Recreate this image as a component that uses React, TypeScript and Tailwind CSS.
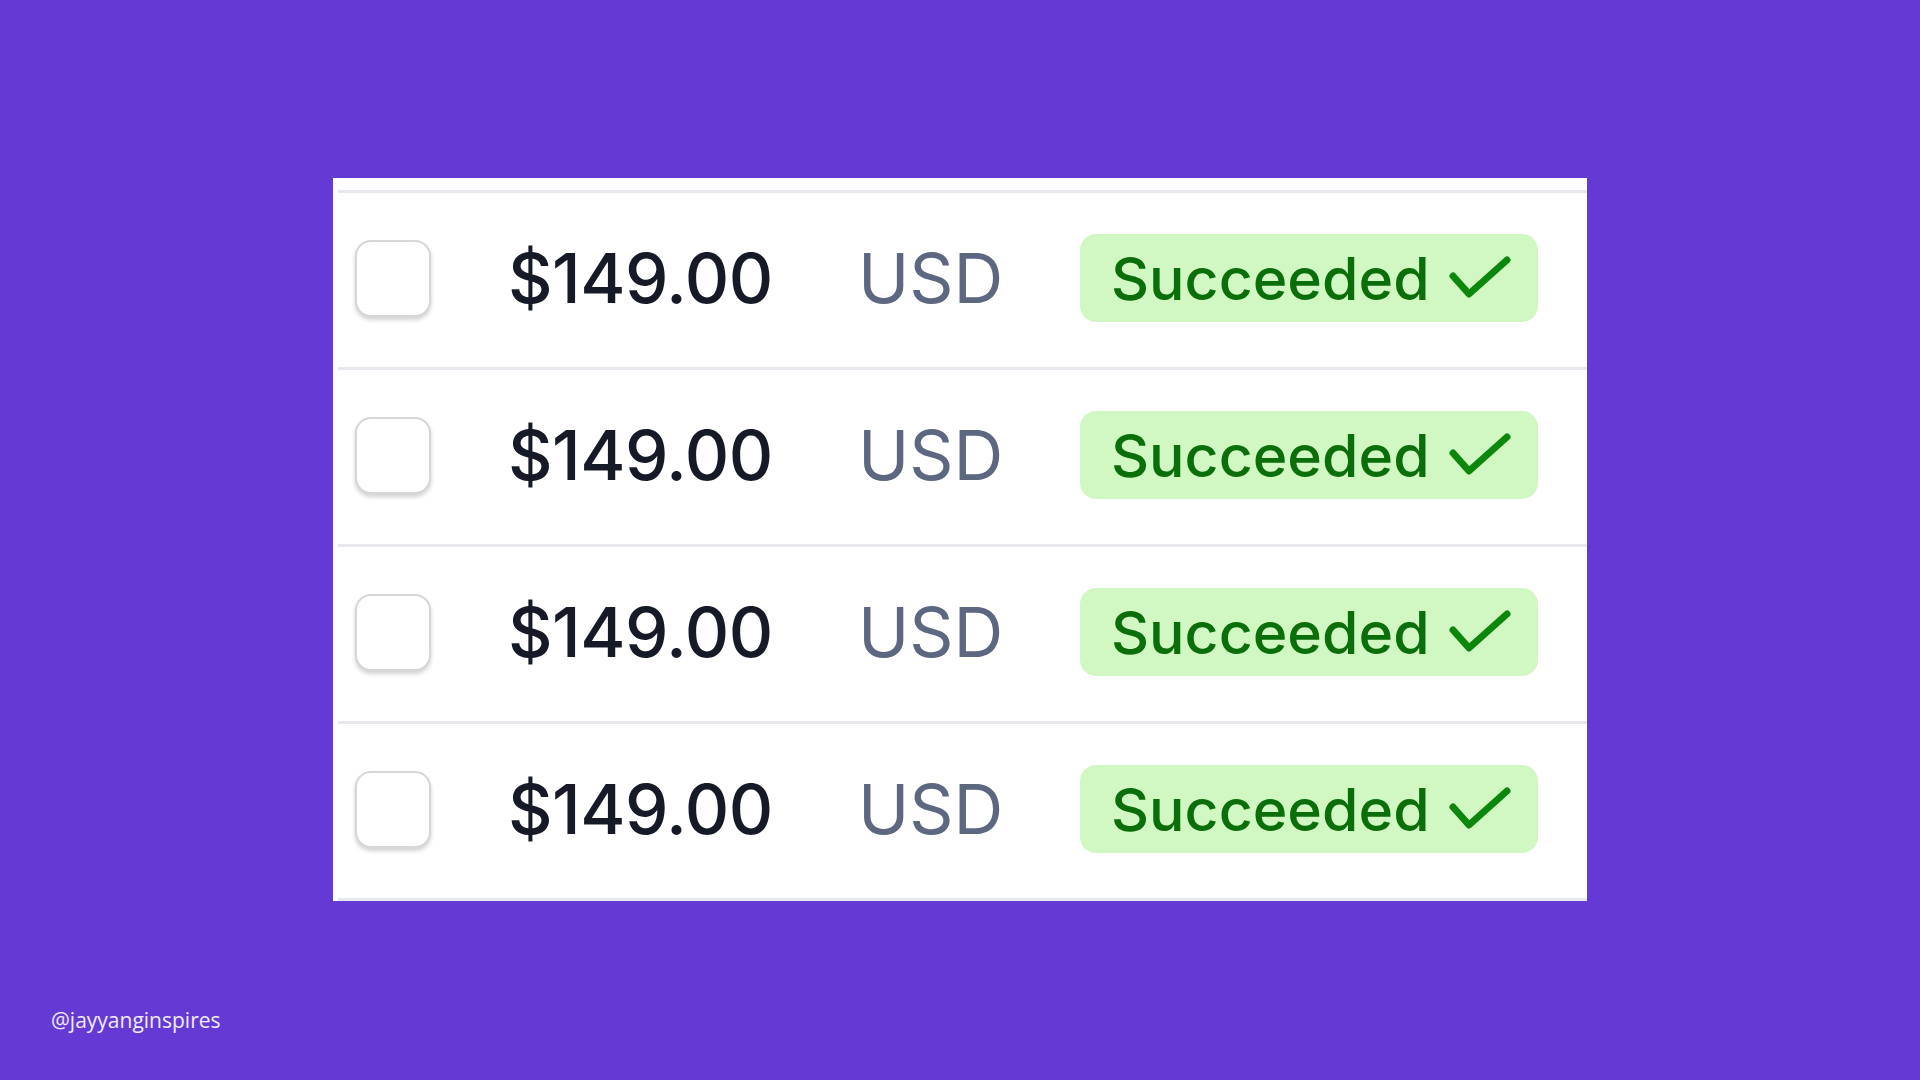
const rows = [1, 2, 3, 4];

function Check() {
  return (
    <svg width="62" height="46" viewBox="0 0 62 46" fill="none" className="shrink-0">
      <polyline points="4,21 20,39 58,5" stroke="#0b880b" strokeWidth="7" strokeLinecap="round" strokeLinejoin="round" />
    </svg>
  );
}

function PaymentRow() {
  return (
    <div className="ml-[5px] h-[177px] border-t-[3px] border-[#e8e9ee] flex items-center pb-[4px]">
      <div className="ml-[17px] w-[76px] h-[77px] rounded-[16px] border-[2px] border-[#d6d6d8] bg-white shadow-[0_3px_4px_rgba(0,0,0,0.18)] shrink-0" />
      <span className="ml-[77px] w-[267px] text-[69px] font-medium leading-none text-[#161a26] tracking-[-0.5px]">$149.00</span>
      <span className="ml-[83px] w-[140px] text-[69px] font-normal leading-none text-[#5d6880]">USD</span>
      <div className="ml-[82px] w-[458px] h-[88px] rounded-[16px] bg-[#d1f8c2] flex items-center pl-[31px] gap-[19px]">
        <span className="text-[59px] font-medium leading-none text-[#0a6e0a]">Succeeded</span>
        <Check />
      </div>
    </div>
  );
}

export default function App() {
  return (
    <div className="w-[1920px] h-[1080px] bg-[#6539d4] relative font-['Inter','Noto_Sans',sans-serif]">
      <div className="absolute left-[333px] top-[178px] w-[1254px] bg-white pt-[12px]">
        {rows.map((r) => (
          <PaymentRow key={r} />
        ))}
        <div className="ml-[5px] border-t-[3px] border-[#e8e9ee]" />
      </div>
      <div className="absolute left-[51px] top-[1005px] text-[21px] text-white/90 font-['Open_Sans',sans-serif]">@jayyanginspires</div>
    </div>
  );
}
